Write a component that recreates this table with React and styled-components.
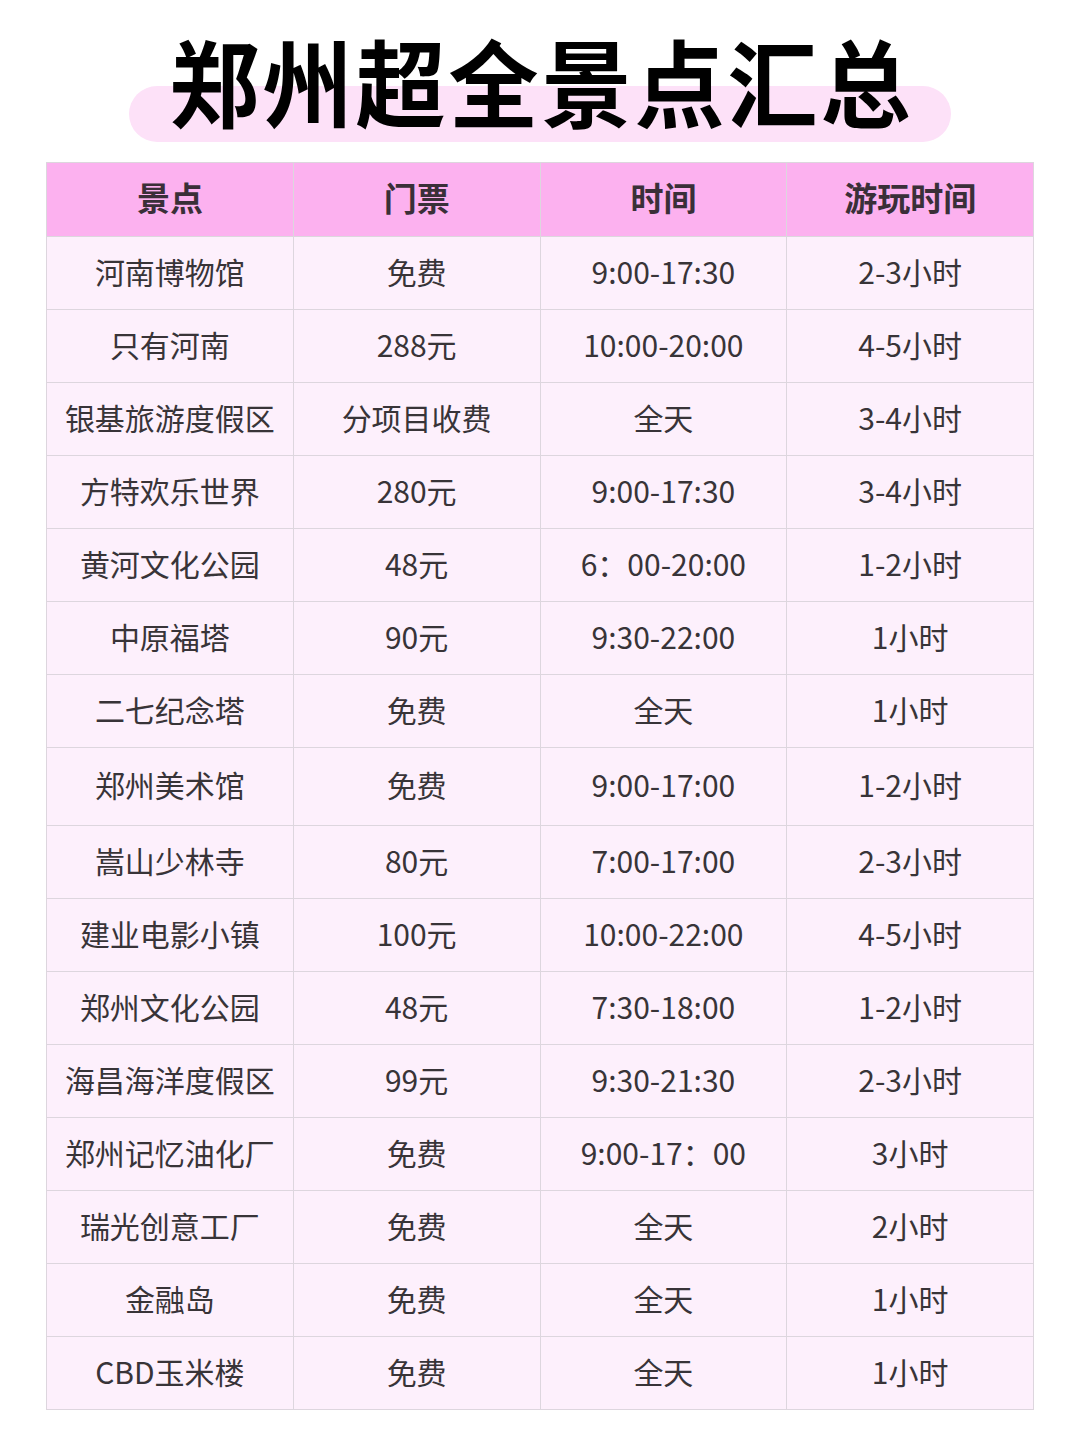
import React from "react";
import styled, { createGlobalStyle } from "styled-components";

const rows = [
  ["河南博物馆", "免费", "9:00-17:30", "2-3小时"],
  ["只有河南", "288元", "10:00-20:00", "4-5小时"],
  ["银基旅游度假区", "分项目收费", "全天", "3-4小时"],
  ["方特欢乐世界", "280元", "9:00-17:30", "3-4小时"],
  ["黄河文化公园", "48元", "6：00-20:00", "1-2小时"],
  ["中原福塔", "90元", "9:30-22:00", "1小时"],
  ["二七纪念塔", "免费", "全天", "1小时"],
  ["郑州美术馆", "免费", "9:00-17:00", "1-2小时", true],
  ["嵩山少林寺", "80元", "7:00-17:00", "2-3小时"],
  ["建业电影小镇", "100元", "10:00-22:00", "4-5小时"],
  ["郑州文化公园", "48元", "7:30-18:00", "1-2小时"],
  ["海昌海洋度假区", "99元", "9:30-21:30", "2-3小时"],
  ["郑州记忆油化厂", "免费", "9:00-17：00", "3小时"],
  ["瑞光创意工厂", "免费", "全天", "2小时"],
  ["金融岛", "免费", "全天", "1小时"],
  ["CBD玉米楼", "免费", "全天", "1小时"],
];

const heads = ["景点", "门票", "时间", "游玩时间"];

const GlobalStyle = createGlobalStyle`
  body {
    margin: 0;
    background: #ffffff;
    font-family: "Noto Sans CJK SC", "Noto Sans", sans-serif;
  }
`;

const Page = styled.div`
  width: 1080px;
  height: 1440px;
  display: flex;
  flex-direction: column;
  align-items: center;
`;

const TitleWrap = styled.div`
  position: relative;
  width: 822px;
  height: 162px;
  display: flex;
  justify-content: center;
  align-items: flex-start;

  &::before {
    content: "";
    position: absolute;
    left: 0;
    right: 0;
    top: 86px;
    height: 56px;
    border-radius: 28px;
    background: #fde1f8;
  }
`;

const Title = styled.h1`
  position: relative;
  margin: 0;
  margin-top: 32px;
  font-size: 90px;
  line-height: 1;
  font-weight: 700;
  letter-spacing: 3px;
  padding-left: 3px;
  white-space: nowrap;
  color: #000000;
  transform: scaleY(1.06);
  transform-origin: top center;
`;

const Table = styled.div`
  width: 988px;
  display: grid;
  grid-template-columns: repeat(4, 1fr);
  border-top: 1px solid #ddd6de;
  border-left: 1px solid #ddd6de;
  box-sizing: border-box;
`;

const Cell = styled.div`
  height: ${(p) => p.$h}px;
  display: flex;
  align-items: center;
  justify-content: center;
  box-sizing: border-box;
  padding-bottom: 5px;
  border-right: 1px solid #ddd6de;
  border-bottom: 1px solid #ddd6de;
  background: ${(p) => (p.$head ? "#fcb1ef" : "#fdf0fc")};
  color: ${(p) => (p.$head ? "#3a2f38" : "#383438")};
  font-size: ${(p) => (p.$head ? 33 : 30)}px;
  font-weight: ${(p) => (p.$head ? 700 : 400)};
  white-space: nowrap;
`;

export default function App() {
  return (
    <Page>
      <GlobalStyle />
      <TitleWrap>
        <Title>郑州超全景点汇总</Title>
      </TitleWrap>
      <Table>
        {heads.map((h) => (
          <Cell key={h} $head $h={74}>
            {h}
          </Cell>
        ))}
        {rows.map((r, i) =>
          r.slice(0, 4).map((c, j) => (
            <Cell key={i + "-" + j} $h={r[4] ? 78 : 73}>
              {c}
            </Cell>
          ))
        )}
      </Table>
    </Page>
  );
}
